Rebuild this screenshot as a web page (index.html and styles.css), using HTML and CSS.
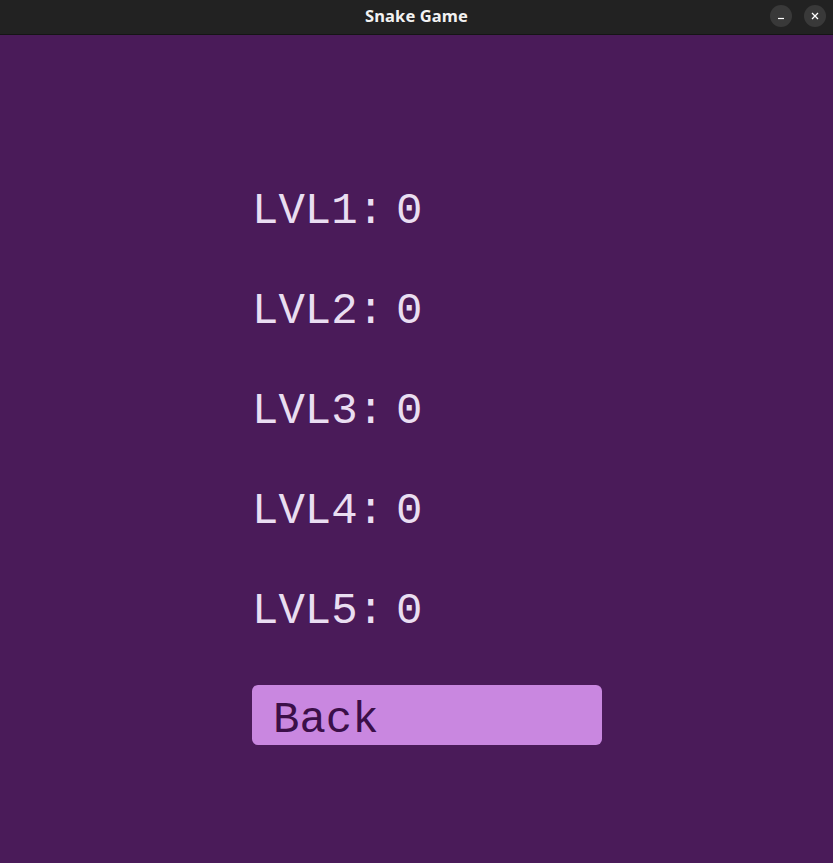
FILE: index.html
```html
<!DOCTYPE html>
<html>
<head>
<meta charset="utf-8">
<link rel="stylesheet" href="styles.css">
</head>
<body>
<div class="window">
  <header class="titlebar">
    <div class="title">Snake Game</div>
    <div class="controls">
      <span class="ctl"><svg width="10" height="10" viewBox="0 0 10 10"><path d="M2 7.5h6" stroke="#fff" stroke-width="1.2"/></svg></span>
      <span class="ctl"><svg width="10" height="10" viewBox="0 0 10 10"><path d="M2 2l6 6M8 2l-6 6" stroke="#fff" stroke-width="1.3"/></svg></span>
    </div>
  </header>
  <main class="content">
    <div class="scores">
      <div class="row"><span class="label">LVL1:</span><span class="value">0</span></div>
      <div class="row"><span class="label">LVL2:</span><span class="value">0</span></div>
      <div class="row"><span class="label">LVL3:</span><span class="value">0</span></div>
      <div class="row"><span class="label">LVL4:</span><span class="value">0</span></div>
      <div class="row"><span class="label">LVL5:</span><span class="value">0</span></div>
      <button class="back">Back</button>
    </div>
  </main>
</div>
</body>
</html>
```
FILE: styles.css
```css
html, body {
  margin: 0;
  padding: 0;
  width: 833px;
  height: 863px;
  overflow: hidden;
  background: #4a1b59;
}
.window {
  display: flex;
  flex-direction: column;
  height: 863px;
}
.titlebar {
  height: 34px;
  flex: none;
  background: #222222;
  border-bottom: 1px solid #151515;
  display: flex;
  align-items: center;
  justify-content: center;
  position: relative;
}
.title {
  font-family: "Noto Sans", "DejaVu Sans", sans-serif;
  font-weight: 700;
  font-size: 16.5px;
  color: #f2f2f2;
  margin-top: -3px;
  letter-spacing: 0.1px;
}
.controls {
  position: absolute;
  right: 7px;
  top: 5px;
  display: flex;
  gap: 12px;
}
.ctl {
  width: 22px;
  height: 22px;
  border-radius: 50%;
  background: #393939;
  display: flex;
  align-items: center;
  justify-content: center;
}
.content {
  flex: 1;
  background: #4a1b59;
  padding-top: 151px;
  padding-left: 252px;
}
.scores {
  display: flex;
  flex-direction: column;
  align-items: flex-start;
  font-family: "Liberation Mono", "Courier New", monospace;
  font-size: 44px;
}
.row {
  height: 100px;
  line-height: 50px;
  color: #e9def1;
  display: flex;
  gap: 12px;
}
.back {
  margin-top: -1px;
  width: 350px;
  height: 60px;
  border: none;
  border-radius: 6px;
  background: #c987e0;
  color: #3b0f48;
  font-family: "Liberation Mono", "Courier New", monospace;
  font-size: 44px;
  text-align: left;
  padding: 9px 0 0 21px;
}
```
